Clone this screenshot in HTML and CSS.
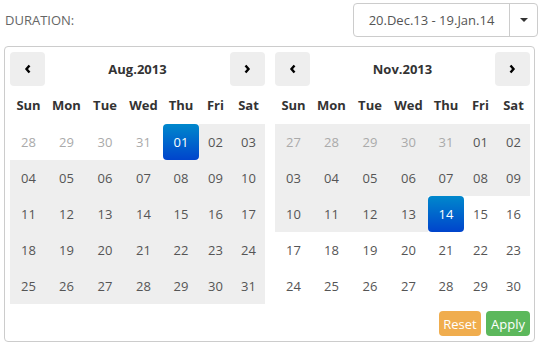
FILE: index.html
```html
<!DOCTYPE html>
<html lang="en">

<head>
  <meta charset="UTF-8">
  <title>Duration</title>
  <link rel="stylesheet" href="styles.css">
</head>

<body>

  <div class="toolbar">
    <span class="label">DURATION:</span>
    <div class="range-input">
      <span class="range-text">20.Dec.13 - 19.Jan.14</span>
      <span class="range-toggle"><i class="caret"></i></span>
    </div>
  </div>

  <div class="picker">
    <div class="calendars">

      <div class="calendar">
        <div class="cal-head">
          <button class="nav"><svg width="8" height="10" viewBox="0 0 8 10"><polyline points="5.5,1.5 2.5,5 5.5,8.5" fill="none" stroke="#000" stroke-width="2.4"/></svg></button>
          <span class="month">Aug.2013</span>
          <button class="nav"><svg width="8" height="10" viewBox="0 0 8 10"><polyline points="2.5,1.5 5.5,5 2.5,8.5" fill="none" stroke="#000" stroke-width="2.4"/></svg></button>
        </div>
        <div class="days">
          <span class="wd">Sun</span><span class="wd">Mon</span><span class="wd">Tue</span><span class="wd">Wed</span><span class="wd">Thu</span><span class="wd">Fri</span><span class="wd">Sat</span>
          <span class="off">28</span><span class="off">29</span><span class="off">30</span><span class="off">31</span><span class="active">01</span><span class="in">02</span><span class="in">03</span>
          <span class="in">04</span><span class="in">05</span><span class="in">06</span><span class="in">07</span><span class="in">08</span><span class="in">09</span><span class="in">10</span>
          <span class="in">11</span><span class="in">12</span><span class="in">13</span><span class="in">14</span><span class="in">15</span><span class="in">16</span><span class="in">17</span>
          <span class="in">18</span><span class="in">19</span><span class="in">20</span><span class="in">21</span><span class="in">22</span><span class="in">23</span><span class="in">24</span>
          <span class="in">25</span><span class="in">26</span><span class="in">27</span><span class="in">28</span><span class="in">29</span><span class="in">30</span><span class="in">31</span>
        </div>
      </div>

      <div class="calendar">
        <div class="cal-head">
          <button class="nav"><svg width="8" height="10" viewBox="0 0 8 10"><polyline points="5.5,1.5 2.5,5 5.5,8.5" fill="none" stroke="#000" stroke-width="2.4"/></svg></button>
          <span class="month">Nov.2013</span>
          <button class="nav"><svg width="8" height="10" viewBox="0 0 8 10"><polyline points="2.5,1.5 5.5,5 2.5,8.5" fill="none" stroke="#000" stroke-width="2.4"/></svg></button>
        </div>
        <div class="days">
          <span class="wd">Sun</span><span class="wd">Mon</span><span class="wd">Tue</span><span class="wd">Wed</span><span class="wd">Thu</span><span class="wd">Fri</span><span class="wd">Sat</span>
          <span class="in off">27</span><span class="in off">28</span><span class="in off">29</span><span class="in off">30</span><span class="in off">31</span><span class="in">01</span><span class="in">02</span>
          <span class="in">03</span><span class="in">04</span><span class="in">05</span><span class="in">06</span><span class="in">07</span><span class="in">08</span><span class="in">09</span>
          <span class="in">10</span><span class="in">11</span><span class="in">12</span><span class="in">13</span><span class="active">14</span><span>15</span><span>16</span>
          <span>17</span><span>18</span><span>19</span><span>20</span><span>21</span><span>22</span><span>23</span>
          <span>24</span><span>25</span><span>26</span><span>27</span><span>28</span><span>29</span><span>30</span>
        </div>
      </div>

    </div>

    <div class="actions">
      <button class="btn btn-reset">Reset</button>
      <button class="btn btn-apply">Apply</button>
    </div>
  </div>

</body>

</html>
```

FILE: styles.css
```css
* {
  margin: 0;
  padding: 0;
  box-sizing: border-box;
}

body {
  background: #fff;
  color: #555;
  font-family: 'Open Sans', sans-serif;
  font-size: 13px;
  width: 539px;
}

.toolbar {
  display: flex;
  justify-content: space-between;
  align-items: flex-start;
  height: 46px;
  padding: 3px 1px 0 5px;
}

.label {
  color: #666;
  line-height: 34px;
}

.range-input {
  display: flex;
  height: 34px;
  border: 1px solid #ccc;
  border-radius: 4px;
}

.range-text {
  width: 156px;
  line-height: 32px;
  text-align: center;
  color: #555;
  border-right: 1px solid #ccc;
}

.range-toggle {
  width: 27px;
  display: flex;
  justify-content: center;
  align-items: center;
}

.caret {
  width: 0;
  height: 0;
  border-left: 4px solid transparent;
  border-right: 4px solid transparent;
  border-top: 4px solid #333;
}

.picker {
  margin-left: 4px;
  width: 531px;
  height: 296px;
  border: 1px solid #ccc;
  border-radius: 4px;
  padding: 5px 4px 5px 5px;
}

.calendars {
  display: flex;
  gap: 10px;
}

.calendar {
  width: 255px;
}

.cal-head {
  display: flex;
  justify-content: space-between;
  align-items: center;
  height: 34px;
}

.nav {
  width: 35px;
  height: 34px;
  border: none;
  border-radius: 4px;
  background: #eee;
  display: flex;
  justify-content: center;
  align-items: center;
}

.month {
  font-weight: bold;
  color: #333;
}

.days {
  display: grid;
  grid-template-columns: 37px 39px 38px 39px 36px 33px 33px;
  grid-auto-rows: 36px;
  grid-template-rows: 38px;
}

.days span {
  line-height: 36px;
  text-align: center;
}

.days .wd {
  line-height: 38px;
  font-weight: bold;
  color: #333;
}

.days .in {
  background: #eee;
}

.days .off {
  color: #aaa;
}

.days .active {
  color: #fff;
  background: linear-gradient(#0088cc, #0044cc);
  border-radius: 4px;
}

.actions {
  display: flex;
  justify-content: flex-end;
  gap: 5px;
  margin-top: 7px;
}

.btn {
  height: 25px;
  border: none;
  border-radius: 4px;
  color: #fff;
  font-family: 'Open Sans', sans-serif;
  font-size: 13px;
  padding: 0;
}

.btn-reset {
  width: 42px;
  background: #f0ad4e;
}

.btn-apply {
  width: 44px;
  background: #5cb85c;
}
```
